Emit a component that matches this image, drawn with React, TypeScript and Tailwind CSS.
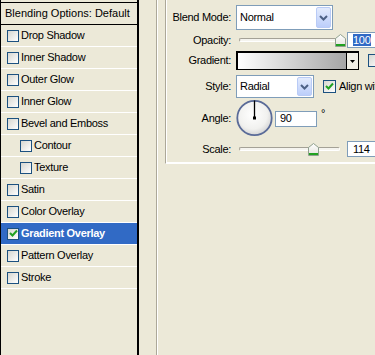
import React from "react";

function Box({ checked = false, small = false }: { checked?: boolean; small?: boolean }) {
  return (
    <div
      className={
        small
          ? "w-[12px] h-[12px] shrink-0 border border-[#1c5180] bg-gradient-to-br from-[#d6d6d0] to-white flex items-center justify-center"
          : "w-[13px] h-[13px] shrink-0 border border-[#1c5180] bg-gradient-to-br from-[#d6d6d0] to-white flex items-center justify-center"
      }
    >
      {checked && (
        <svg width="9" height="9" viewBox="0 0 9 9">
          <path d="M1 4 L3.5 6.5 L8 1.5" fill="none" stroke="#21a121" strokeWidth="2" />
        </svg>
      )}
    </div>
  );
}

function Row({
  label,
  indent = false,
  checked = false,
  active = false,
}: {
  label: string;
  indent?: boolean;
  checked?: boolean;
  active?: boolean;
}) {
  return (
    <div
      className={
        (active ? "bg-[#316ac5] text-white font-bold " : "text-black ") +
        (indent ? "pl-[19px] " : "pl-[6px] ") +
        "h-[22px] border-b border-white flex items-center gap-[2px] shrink-0"
      }
    >
      <Box checked={checked} small />
      <span className="whitespace-nowrap">{label}</span>
    </div>
  );
}

function Chevron() {
  return (
    <svg width="9" height="6" viewBox="0 0 9 6">
      <path d="M1 1 L4.5 4.5 L8 1" fill="none" stroke="#4d6185" strokeWidth="2" />
    </svg>
  );
}

function Select({ value, wide }: { value: string; wide: boolean }) {
  return (
    <div
      className={
        (wide ? "w-[97px] " : "w-[78px] ") +
        "h-full border border-[#7f9db9] bg-white flex items-stretch"
      }
    >
      <span className="flex-1 flex items-center pl-[3px] whitespace-nowrap">{value}</span>
      <div className="w-[15px] my-[1px] mr-[1px] rounded-[2px] border border-[#b9cbf6] bg-gradient-to-b from-[#e3ebfd] to-[#bccefa] flex items-center justify-center">
        <Chevron />
      </div>
    </div>
  );
}

function Thumb() {
  return (
    <svg width="11" height="13" viewBox="0 0 11 13">
      <defs>
        <linearGradient id="tg" x1="0" y1="0" x2="0" y2="1">
          <stop offset="0" stopColor="#ffffff" />
          <stop offset="1" stopColor="#e4e3dc" />
        </linearGradient>
      </defs>
      <path d="M0.5 4.5 L5.5 0.5 L10.5 4.5 V12.5 H0.5 Z" fill="url(#tg)" stroke="#8fa08f" />
      <rect x="1" y="10" width="9" height="2" fill="#21a121" />
    </svg>
  );
}

function Slider({ pos }: { pos: number }) {
  return (
    <div className="relative w-[108px] h-full ml-[3px] flex items-center">
      <div className="w-[101px] h-[4px] rounded-[2px] border border-[#a4a196] border-b-white border-r-white bg-[#f5f4ef]" />
      <div className="absolute top-0 bottom-0 flex items-center" style={{ left: pos }}>
        <Thumb />
      </div>
    </div>
  );
}

function Dial() {
  return (
    <svg width="37" height="38" viewBox="0 0 37 38">
      <defs>
        <radialGradient id="dg" cx="0.45" cy="0.4" r="0.6">
          <stop offset="0" stopColor="#ffffff" />
          <stop offset="0.7" stopColor="#f1f1ef" />
          <stop offset="1" stopColor="#d5d5d5" />
        </radialGradient>
      </defs>
      <circle cx="18.5" cy="19" r="17.2" fill="url(#dg)" stroke="#5a6b98" strokeWidth="1.8" />
      <line x1="18.5" y1="1.5" x2="18.5" y2="19" stroke="#000" strokeWidth="1.3" />
      <rect x="17" y="17.5" width="3" height="3" fill="#000" />
    </svg>
  );
}

export default function App() {
  return (
    <div className="w-[375px] h-[355px] overflow-hidden bg-[#ece9d8] flex font-['Liberation_Sans',Arial,sans-serif] text-[11px] tracking-[-0.3px] text-black leading-none">
      {/* Left list */}
      <div className="w-[139px] h-full shrink-0 border-l border-r-2 border-black pt-[2px] flex flex-col">
        <div className="h-[23px] shrink-0 border-t border-b border-black flex items-center pl-[4px] whitespace-nowrap tracking-[0px]">
          Blending Options: Default
        </div>
        <Row label="Drop Shadow" />
        <Row label="Inner Shadow" />
        <Row label="Outer Glow" />
        <Row label="Inner Glow" />
        <Row label="Bevel and Emboss" />
        <Row label="Contour" indent />
        <Row label="Texture" indent />
        <Row label="Satin" />
        <Row label="Color Overlay" />
        <Row label="Gradient Overlay" checked active />
        <Row label="Pattern Overlay" />
        <Row label="Stroke" />
      </div>

      {/* splitter */}
      <div className="w-[17px] shrink-0" />
      <div className="w-[1px] shrink-0 h-full bg-[#aca899]" />
      <div className="w-[1px] shrink-0 h-full bg-white" />

      {/* Right pane */}
      <div className="flex-1 pl-[7px]">
        <div className="w-[260px] h-[164px] border-l border-b border-l-[#aca899] border-b-white shadow-[inset_1px_-1px_0_#ffffff,inset_0_-1px_0_#aca899] flex flex-col">
          {/* Blend Mode */}
          <div className="mt-[5px] h-[25px] flex items-center shrink-0">
            <span className="w-[65px] text-right shrink-0 whitespace-nowrap">Blend Mode:</span>
            <div className="ml-[5px] h-full">
              <Select value="Normal" wide />
            </div>
          </div>
          {/* Opacity */}
          <div className="h-[20px] flex items-center shrink-0">
            <span className="w-[65px] text-right shrink-0">Opacity:</span>
            <div className="ml-[5px] h-full flex items-center">
              <Slider pos={96} />
              <div className="w-[40px] h-[16px] border border-[#7f9db9] bg-white flex items-center pl-[5px]">
                <span className="bg-[#316ac5] text-white leading-[12px] pr-[1px]">100</span>
              </div>
            </div>
          </div>
          {/* Gradient */}
          <div className="h-[21px] flex items-center shrink-0">
            <span className="w-[65px] text-right shrink-0">Gradient:</span>
            <div className="ml-[5px] flex items-center">
              <div className="w-[123px] h-[19px] border-t-2 border-l-2 border-r border-b border-black flex">
                <div className="flex-1 bg-gradient-to-r from-white to-[#a6a6a6]" />
                <div className="w-[1px] bg-black" />
                <div className="w-[11px] bg-[#f1efe6] flex items-center justify-center">
                  <svg width="5" height="3" viewBox="0 0 5 3">
                    <path d="M0 0 H5 L2.5 3 Z" fill="#000" />
                  </svg>
                </div>
              </div>
              <div className="ml-[9px]">
                <Box />
              </div>
            </div>
          </div>
          {/* Style */}
          <div className="mt-[4px] h-[23px] flex items-center shrink-0">
            <span className="w-[65px] text-right shrink-0">Style:</span>
            <div className="ml-[5px] h-full flex items-center">
              <div className="h-full">
                <Select value="Radial" wide={false} />
              </div>
              <div className="ml-[9px]">
                <Box checked />
              </div>
              <span className="ml-[3px] whitespace-nowrap">Align with Layer</span>
            </div>
          </div>
          {/* Angle */}
          <div className="mt-[1px] h-[38px] flex items-center shrink-0">
            <span className="w-[65px] text-right shrink-0">Angle:</span>
            <div className="ml-[5px] flex items-center">
              <Dial />
              <div className="ml-[2px] w-[42px] h-[16px] border border-[#7f9db9] bg-white flex items-center pl-[4px] mt-[1px]">
                90
              </div>
              <span className="ml-[4px] mb-[10px]">°</span>
            </div>
          </div>
          {/* Scale */}
          <div className="mt-[4px] h-[16px] flex items-center shrink-0">
            <span className="w-[65px] text-right shrink-0">Scale:</span>
            <div className="ml-[5px] h-full flex items-center">
              <Slider pos={69} />
              <div className="w-[40px] h-[16px] border border-[#7f9db9] bg-white flex items-center pl-[5px]">
                114
              </div>
            </div>
          </div>
        </div>
      </div>
    </div>
  );
}
